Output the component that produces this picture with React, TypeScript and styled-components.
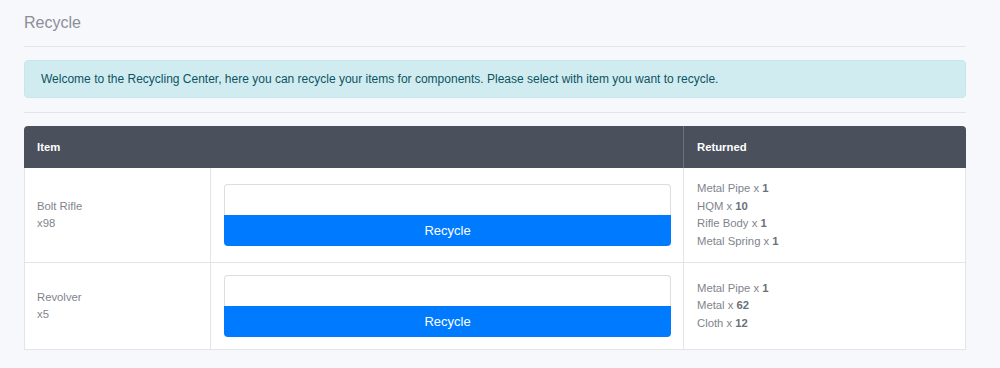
import React from 'react';
import styled, { createGlobalStyle } from "styled-components";

const GlobalStyle = createGlobalStyle`
  body {
    margin: 0;
    background: #f7f8fc;
    font-family: "Liberation Sans", Arial, sans-serif;
  }
`

type Part = { name: string; count: number }
type ItemType = { name: string; amount: number; returned: Part[] }

const items: ItemType[] = [
    {
        name: "Bolt Rifle",
        amount: 98,
        returned: [
            { name: "Metal Pipe", count: 1 },
            { name: "HQM", count: 10 },
            { name: "Rifle Body", count: 1 },
            { name: "Metal Spring", count: 1 },
        ],
    },
    {
        name: "Revolver",
        amount: 5,
        returned: [
            { name: "Metal Pipe", count: 1 },
            { name: "Metal", count: 62 },
            { name: "Cloth", count: 12 },
        ],
    },
]

export default function App() {
    return (
        <Page>
            <GlobalStyle/>
            <Title>Recycle</Title>
            <Divider/>
            <Alert>
                Welcome to the Recycling Center, here you can recycle your items for components. Please select with item you want to recycle.
            </Alert>
            <Divider/>
            <Table>
                <colgroup>
                    <col style={{ width: 186 }}/>
                    <col/>
                    <col style={{ width: 283 }}/>
                </colgroup>
                <thead>
                <tr>
                    <HeadCell colSpan={2}>Item</HeadCell>
                    <HeadCell $divider>Returned</HeadCell>
                </tr>
                </thead>
                <tbody>
                {items.map(item => (
                    <tr key={item.name}>
                        <Cell>
                            <Line>{item.name}</Line>
                            <Line>x{item.amount}</Line>
                        </Cell>
                        <Cell>
                            <AmountInput type="text"/>
                            <RecycleButton>Recycle</RecycleButton>
                        </Cell>
                        <Cell>
                            {item.returned.map(p => (
                                <Line key={p.name}>{p.name} x <b>{p.count}</b></Line>
                            ))}
                        </Cell>
                    </tr>
                ))}
                </tbody>
            </Table>
        </Page>
    );
}

const Page = styled.div`
  padding: 0 34px 0 24px;
`

const Title = styled.h2`
  margin: 0;
  padding-top: 13px;
  font-size: 16px;
  font-weight: normal;
  line-height: 19px;
  color: #8a8f97;
`

const Divider = styled.hr`
  border: none;
  border-top: 1px solid #e2e4ea;
  margin: 14px 0 13px;
`

const Alert = styled.div`
  background: #d1ecf1;
  border: 1px solid #c5e6ec;
  border-radius: 4px;
  color: #0c5460;
  font-size: 12px;
  line-height: 14px;
  padding: 11px 16px;
`

const Table = styled.table`
  width: 100%;
  border-collapse: separate;
  border-spacing: 0;
  table-layout: fixed;
  background: #fff;
  color: #80858d;
  font-size: 11.3px;
`

const HeadCell = styled.th<{ $divider?: boolean }>`
  background: #4a515c;
  color: #fff;
  font-weight: bold;
  text-align: left;
  height: 42px;
  padding: 0 13px;
  box-sizing: border-box;
  border-left: ${p => p.$divider ? "1px solid #6b727c" : "none"};
  &:first-child { border-top-left-radius: 4px; }
  &:last-child { border-top-right-radius: 4px; }
`

const Cell = styled.td`
  vertical-align: middle;
  padding: 12px 12px 12px 13px;
  border-bottom: 1px solid #e3e5e9;
  border-left: 1px solid #e3e5e9;
  &:last-child { border-right: 1px solid #e3e5e9; }
  &:first-child { padding-left: 12px; }
`

const Line = styled.div`
  line-height: 17.5px;
  b { color: #6c7179; }
`

const AmountInput = styled.input`
  display: block;
  width: 100%;
  height: 31px;
  box-sizing: border-box;
  border: 1px solid #dadde2;
  border-bottom: none;
  border-radius: 4px 4px 0 0;
  outline: none;
`

const RecycleButton = styled.button`
  display: block;
  width: 100%;
  height: 31px;
  border: none;
  border-radius: 0 0 4px 4px;
  background: #007bff;
  color: #fff;
  font-family: "Liberation Sans", Arial, sans-serif;
  font-size: 13px;
`
